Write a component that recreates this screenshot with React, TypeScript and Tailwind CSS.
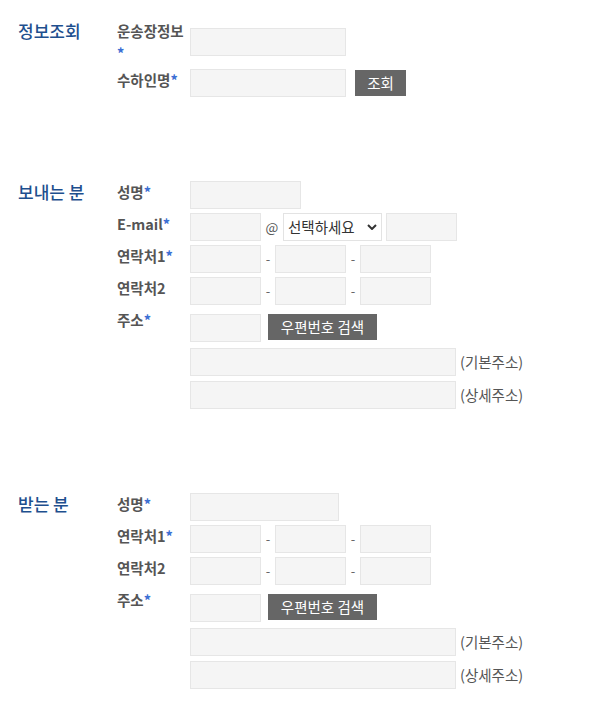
const field = "h-7 bg-[#f5f5f5] border border-[#e6e6e6] outline-none";

function Label({ text, required = true, className = "" }: { text: string; required?: boolean; className?: string }) {
  return (
    <div className={`w-[70px] mr-[3px] shrink-0 text-[14.5px] leading-[22px] font-semibold text-[#555] ${className}`}>
      {text}
      {required && <span className="text-[#3b6fd4]">*</span>}
    </div>
  );
}

function Box({ w }: { w: string }) {
  return <input type="text" className={`${field} ${w}`} />;
}

function Dash() {
  return <span className="w-[14px] text-center text-[13px] text-[#666]">-</span>;
}

function Phone({ label, required }: { label: string; required?: boolean }) {
  return (
    <div className="flex items-start">
      <Label text={label} required={required} />
      <div className="flex items-center">
        <Box w="w-[71px]" />
        <Dash />
        <Box w="w-[71px]" />
        <Dash />
        <Box w="w-[71px]" />
      </div>
    </div>
  );
}

function Address() {
  return (
    <>
      <div className="flex items-start mt-[5px]">
        <Label text="주소" className="-mt-[5px]" />
        <div className="flex items-start gap-[7px]">
          <Box w="w-[71px]" />
          <button className="h-[26px] w-[109px] bg-[#666] text-white text-[14.5px] leading-[26px]">우편번호 검색</button>
        </div>
      </div>
      <div className="flex items-center pl-[73px] mt-[2px]">
        <Box w="w-[266px]" />
        <span className="ml-[4px] text-[14.5px] text-[#555]">(기본주소)</span>
      </div>
      <div className="flex items-center pl-[73px] mt-[1px]">
        <Box w="w-[266px]" />
        <span className="ml-[4px] text-[14.5px] text-[#555]">(상세주소)</span>
      </div>
    </>
  );
}

function Section({ title, className = "", children }: { title: string; className?: string; children: React.ReactNode }) {
  return (
    <section className={`flex ${className}`}>
      <h2 className="w-[117px] shrink-0 pl-[18px] text-[17px] leading-[22px] font-medium text-[#1e4f8e]">{title}</h2>
      <div className="flex flex-col gap-1">{children}</div>
    </section>
  );
}

export default function App() {
  return (
    <div className="min-h-[718px] bg-white pt-[20px] font-['Noto_Sans_CJK_KR',sans-serif]">
      <Section title="정보조회">
        <div className="flex items-center">
          <Label text="운송장정보" />
          <Box w="w-[156px]" />
        </div>
        <div className="flex items-start mt-[1px]">
          <Label text="수하인명" />
          <div className="flex items-center gap-[9px]">
            <Box w="w-[156px]" />
            <button className="h-[26px] w-[51px] bg-[#666] text-white text-[14.5px] leading-[26px]">조회</button>
          </div>
        </div>
      </Section>

      <Section title="보내는 분" className="mt-[84px]">
        <div className="flex items-start">
          <Label text="성명" />
          <Box w="w-[111px]" />
        </div>
        <div className="flex items-start">
          <Label text="E-mail" />
          <div className="flex items-center">
            <Box w="w-[71px]" />
            <span className="w-[22px] text-center text-[13.5px] text-[#555]">@</span>
            <div className="relative h-7 w-[99px] border border-[#e3e3e3] bg-white">
              <span className="absolute left-[4px] top-[2px] text-[14.5px] leading-[22px] text-[#333]">선택하세요</span>
              <svg className="absolute right-[4px] top-[10px]" width="10" height="6" viewBox="0 0 10 6">
                <path d="M1 1l4 4 4-4" fill="none" stroke="#333" strokeWidth="2" />
              </svg>
            </div>
            <span className="w-[4px]" />
            <Box w="w-[71px]" />
          </div>
        </div>
        <Phone label="연락처1" required />
        <Phone label="연락처2" required={false} />
        <Address />
      </Section>

      <Section title="받는 분" className="mt-[84px]">
        <div className="flex items-start">
          <Label text="성명" />
          <Box w="w-[149px]" />
        </div>
        <Phone label="연락처1" required />
        <Phone label="연락처2" required={false} />
        <Address />
      </Section>
    </div>
  );
}
